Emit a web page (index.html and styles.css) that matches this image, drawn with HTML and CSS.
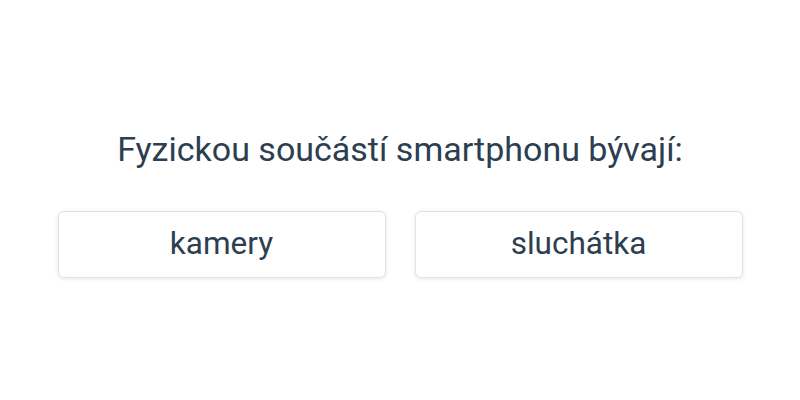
FILE: index.html
```html
<!DOCTYPE html>
<html>
<head>
<meta charset="utf-8">
<link rel="stylesheet" href="styles.css">
</head>
<body>
<main class="quiz">
  <h1 class="question">Fyzickou součástí smartphonu bývají:</h1>
  <div class="answers">
    <button class="answer">kamery</button>
    <button class="answer">sluchátka</button>
  </div>
</main>
</body>
</html>
```
FILE: styles.css
```css
html, body {
  margin: 0;
  padding: 0;
  background: #ffffff;
}
body {
  width: 800px;
  height: 400px;
  font-family: Roboto, "Noto Sans", sans-serif;
  color: #2c3e50;
}
.quiz {
  display: flex;
  flex-direction: column;
  align-items: center;
  padding-top: 127px;
}
.question {
  margin: 0;
  font-weight: 400;
  font-size: 34px;
  line-height: 44px;
}
.answers {
  display: flex;
  gap: 29px;
  margin-top: 40px;
}
.answer {
  width: 328px;
  height: 67px;
  background: #ffffff;
  border: 1px solid #e2e2e2;
  border-radius: 6px;
  box-shadow: 0 1px 4px rgba(0, 0, 0, 0.1);
  font-family: Roboto, "Noto Sans", sans-serif;
  font-size: 31.5px;
  color: #2c3e50;
  padding: 0 0 2px;
}
```
